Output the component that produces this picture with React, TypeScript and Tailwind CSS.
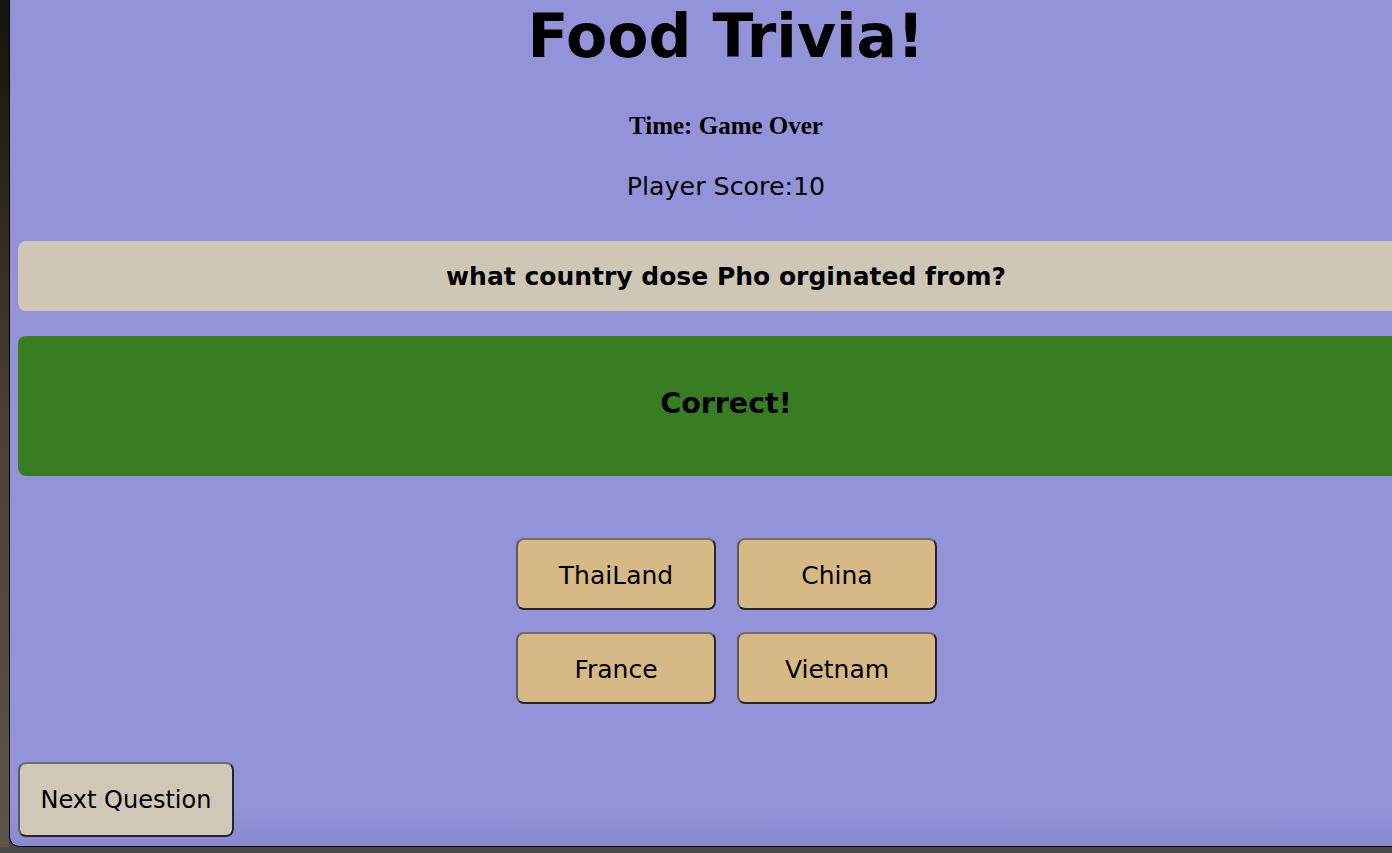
import React from "react";

export default function App() {
  const sans = { fontFamily: '"DejaVu Sans", Verdana, sans-serif' };
  const serif = { fontFamily: '"Liberation Serif", "Times New Roman", serif' };
  return (
    <div className="w-[1392px] h-[853px] overflow-hidden flex flex-col bg-[#4a4a46]">
      <div className="flex h-[847px]">
        <div className="w-[9px] h-full bg-gradient-to-b from-[#15140c] via-[#4a4230] to-[#5c5648]" />
        <div className="flex-1 h-full overflow-hidden border-l border-b border-black rounded-bl-[10px] bg-gradient-to-b from-[#9393da] from-95% to-[#8a8ad2]">
          <div className="w-[1432px] px-[8px] flex flex-col items-center text-black" style={sans}>
            <div className="h-[71px] w-full flex items-center justify-center text-[60px] leading-none font-bold">
              Food Trivia!
            </div>
            <div className="mt-[42px] h-[25px] flex items-center justify-center text-[25px] leading-none font-bold" style={serif}>
              Time: Game Over
            </div>
            <div className="mt-[36px] h-[25px] flex items-center justify-center text-[25.3px] leading-none">
              Player Score:10
            </div>
            <div className="mt-[42px] h-[70px] w-full rounded-[8px] bg-[#cfc7b5] flex items-center justify-center pt-[1px] text-[25px] font-bold">
              what country dose Pho orginated from?
            </div>
            <div className="mt-[25px] h-[140px] w-full rounded-[8px] bg-[#387d22] flex items-center justify-center pb-[3px] text-[28.5px] font-bold">
              Correct!
            </div>
            <div className="mt-[62px] ml-[1px] grid grid-cols-[200px_200px] gap-x-[21px] gap-y-[22px]">
              {["ThaiLand", "China", "France", "Vietnam"].map((a) => (
                <button
                  key={a}
                  className="h-[72px] w-[200px] rounded-[8px] bg-[#d6b985] border-2 border-[#262626] border-t-[#6e6e6e] border-l-[#5a5a5a] text-[25px] pt-[3px] flex items-center justify-center"
                  style={sans}
                >
                  {a}
                </button>
              ))}
            </div>
            <div className="mt-[58px] w-full flex">
              <button
                className="h-[75px] w-[216px] rounded-[8px] bg-[#d0c8b6] border-2 border-[#262626] border-t-[#6e6e6e] border-l-[#5a5a5a] text-[24px] flex items-center justify-center"
                style={sans}
              >
                Next Question
              </button>
            </div>
          </div>
        </div>
      </div>
    </div>
  );
}
